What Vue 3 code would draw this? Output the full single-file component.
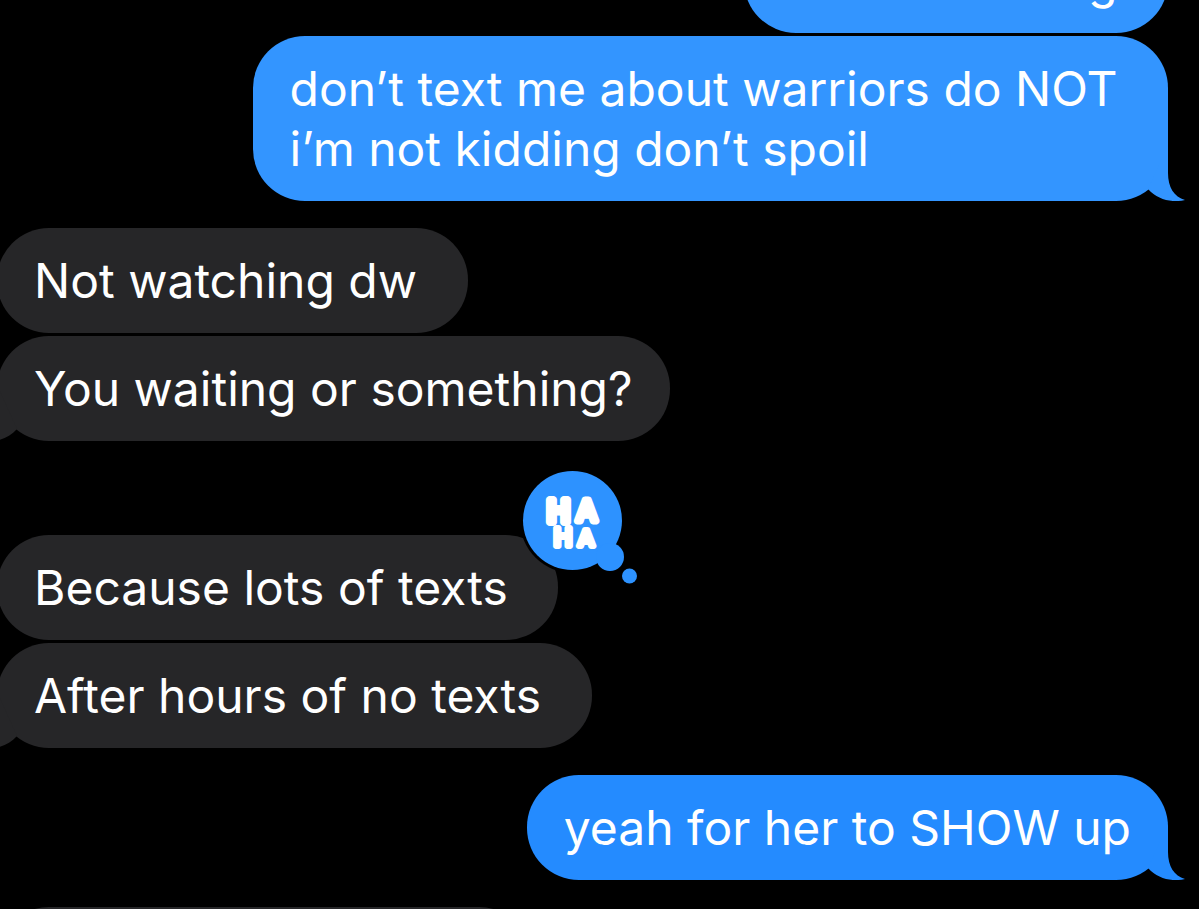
<script setup>
const messages = [
  { id: 1, side: 'sent', tone: 'light', text: 'i was watching ' },
  { id: 2, side: 'sent', tone: 'light', text: 'don’t text me about warriors do NOT \ni’m not kidding don’t spoil', tail: true },
  { id: 3, side: 'received', text: 'Not watching dw ' },
  { id: 4, side: 'received', text: 'You waiting or something?', tail: true },
  { id: 5, side: 'received', text: 'Because lots of texts ', haha: true },
  { id: 6, side: 'received', text: 'After hours of no texts ', tail: true },
  { id: 7, side: 'sent', tone: 'deep', text: 'yeah for her to SHOW up', tail: true },
  { id: 8, side: 'received', text: 'When does she sing' },
]
</script>

<template>
  <main class="thread">
    <ol class="messages">
      <li
        v-for="m in messages"
        :key="m.id"
        class="row"
        :class="[m.side, m.tone, { last: m.tail, reacted: m.haha }]"
      >
        <div class="bubble">
          <p class="text">{{ m.text }}</p>
          <svg v-if="m.tail" class="tail" viewBox="0 0 45 56" aria-hidden="true">
            <path d="M28 0V28C28 42 34 52 45 55C32 58 18 55 8 44Z" />
          </svg>
          <svg v-if="m.haha" class="reaction" viewBox="0 0 120 120" role="img" aria-label="Haha reaction">
            <circle class="ring" cx="52.5" cy="52.5" r="52.5" />
            <g class="cloud">
              <circle cx="52.5" cy="52.5" r="49.5" />
              <circle cx="90" cy="89" r="14" />
              <circle cx="109.5" cy="108" r="7.5" />
            </g>
            <g class="haha">
              <text>
                <tspan x="38.5" y="54" font-size="31" stroke-width="8">H</tspan>
                <tspan x="66.5" y="53" font-size="28" stroke-width="7">A</tspan>
              </text>
              <text>
                <tspan x="43" y="78" font-size="25" stroke-width="6">H</tspan>
                <tspan x="66" y="78" font-size="22" stroke-width="6">A</tspan>
              </text>
            </g>
          </svg>
        </div>
      </li>
    </ol>
  </main>
</template>

<style scoped>
.thread {
  height: 100vh;
  overflow: hidden;
  background: #000;
  color: #fff;
  font-family: Inter, "Liberation Sans", sans-serif;
  font-size: 48px;
  line-height: 60px;
}
.messages {
  list-style: none;
  display: flex;
  flex-direction: column;
  gap: 3px;
  margin: -72px 0 0;
  padding: 0 31px 0 0;
}
.row {
  display: flex;
  color: #262628;
}
.row.sent {
  justify-content: flex-end;
}
.row.received {
  margin-left: -3px;
}
.row.last {
  margin-bottom: 24px;
}
.row.reacted {
  margin-top: 67px;
}
.row.light {
  color: #3395ff;
}
.row.deep {
  color: #248bff;
}
.bubble {
  position: relative;
  padding: 23px 37px 22px;
  border-radius: 52px;
  background: currentColor;
}
.text {
  margin: 0;
  color: #fff;
  white-space: break-spaces;
}
.tail {
  position: absolute;
  right: -17px;
  bottom: 0;
  width: 45px;
  height: 56px;
  fill: currentColor;
}
.received .tail {
  right: auto;
  left: -17px;
  transform: scaleX(-1);
}
.reaction {
  position: absolute;
  top: -67px;
  right: -82px;
  width: 120px;
  height: 120px;
}
.ring {
  fill: #000;
}
.cloud {
  fill: #2d92ff;
}
.haha {
  fill: #fff;
  stroke: #fff;
  stroke-linejoin: round;
  font-family: "DejaVu Sans", sans-serif;
  text-anchor: middle;
}
</style>

<style>
body {
  background: #000;
}
</style>
